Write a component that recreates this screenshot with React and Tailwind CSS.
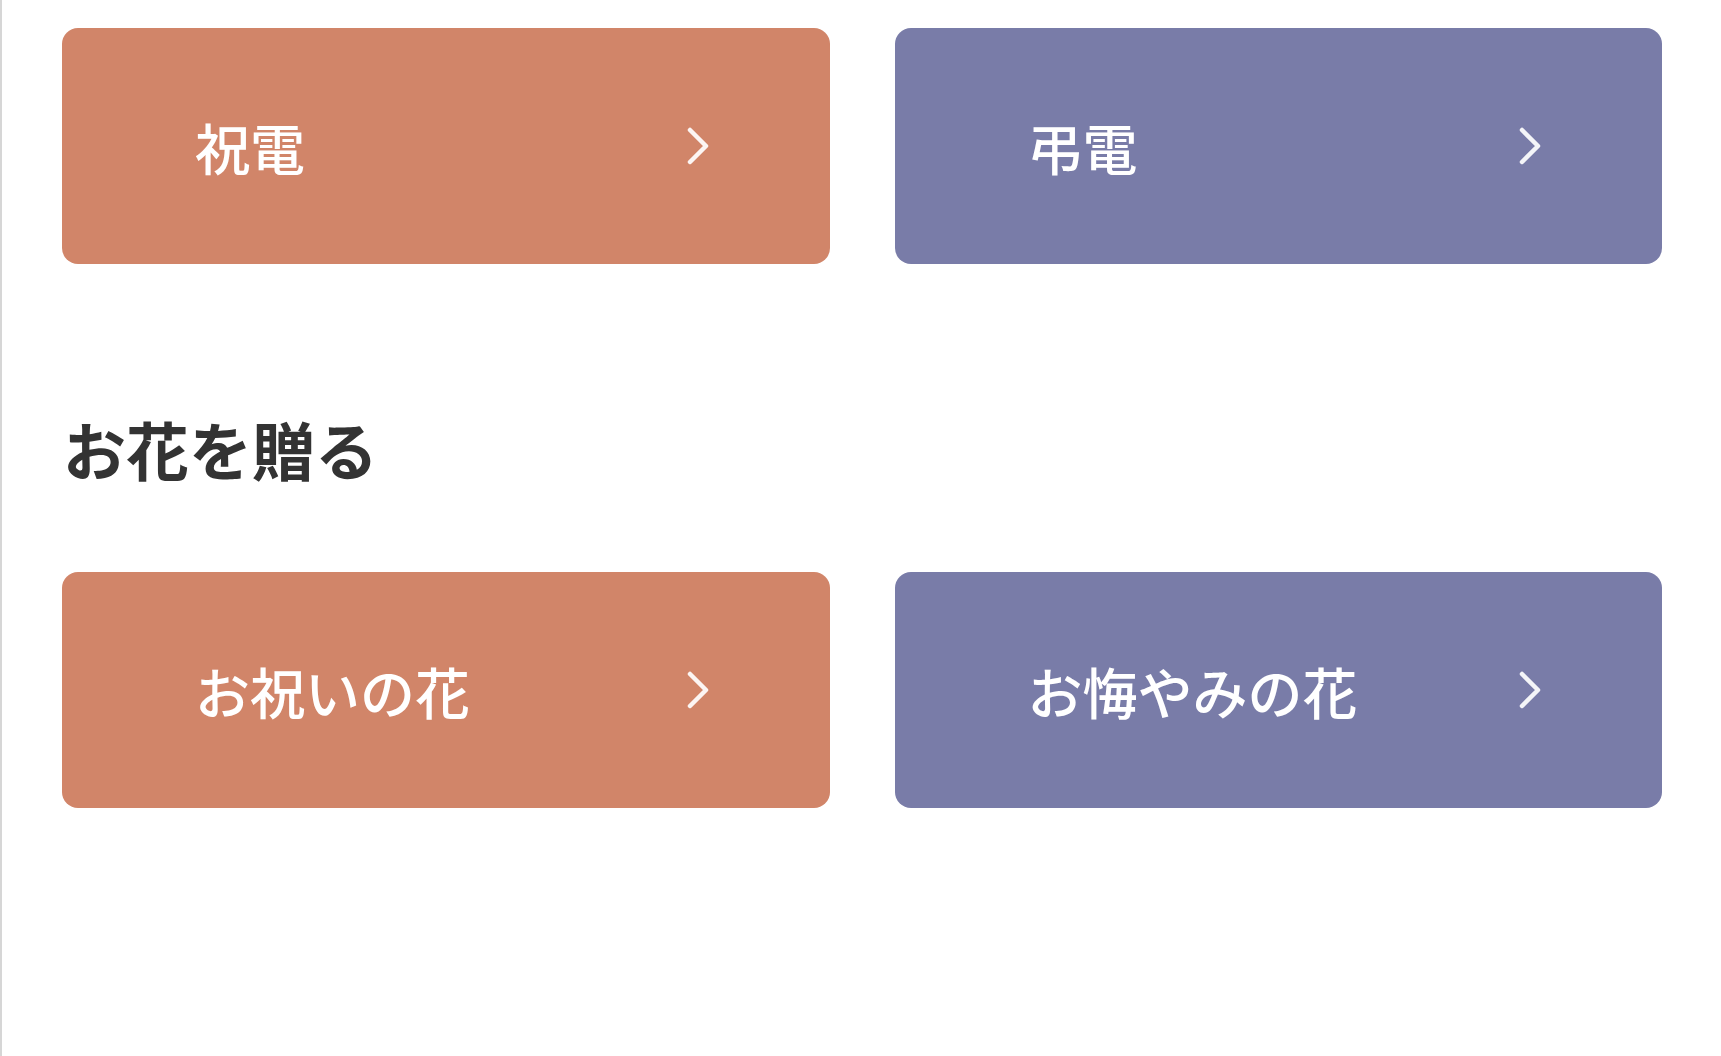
function Chevron() {
  return (
    <svg width="26" height="40" viewBox="0 0 26 40" fill="none" className="shrink-0 blur-[0.7px]">
      <polyline points="4,4 20,20 4,36" stroke="#fff" strokeOpacity="0.92" strokeWidth="4.5" strokeLinecap="round" strokeLinejoin="round" />
    </svg>
  );
}

function LinkButton({ label, color }) {
  return (
    <a
      href="#"
      className={`flex h-[236px] items-center justify-between rounded-[16px] pl-[133px] pr-[118px] text-white ${color}`}
    >
      <span className="text-[55px] font-medium leading-none">{label}</span>
      <Chevron />
    </a>
  );
}

export default function App() {
  const font = { fontFamily: '"Noto Sans CJK JP", "Noto Sans", sans-serif' };
  return (
    <div style={font} className="min-h-[1056px] border-l-2 border-[#d6d6d6] bg-white pl-[60px] pr-[59px] pt-[28px]">
      <div className="grid grid-cols-2 gap-x-[65px]">
        <LinkButton label="祝電" color="bg-[#d18569]" />
        <LinkButton label="弔電" color="bg-[#797ca8]" />
      </div>

      <h2 className="mt-[152px] mb-[93px] pl-[1px] text-[63px] font-bold leading-none text-[#333333]">お花を贈る</h2>

      <div className="grid grid-cols-2 gap-x-[65px]">
        <LinkButton label="お祝いの花" color="bg-[#d18569]" />
        <LinkButton label="お悔やみの花" color="bg-[#797ca8]" />
      </div>
    </div>
  );
}
